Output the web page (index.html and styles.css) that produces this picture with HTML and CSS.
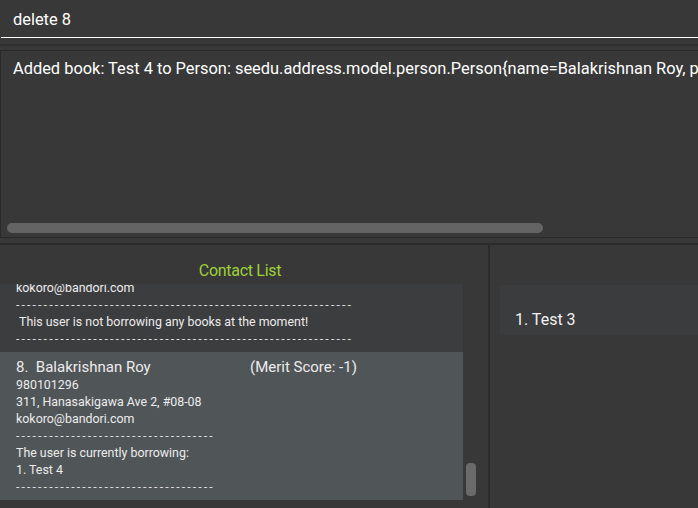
FILE: index.html
```html
<!DOCTYPE html>
<html>
<head>
<meta charset="utf-8">
<link rel="stylesheet" href="styles.css">
</head>
<body>
<div class="app">
  <div class="command">delete 8</div>
  <div class="sep"><div class="sep-line"></div></div>
  <div class="result">
    <div class="result-text">Added book: Test 4 to Person: seedu.address.model.person.Person{name=Balakrishnan Roy, phone=980101296, email=kokoro@bandori.com}</div>
    <div class="hscroll"><div class="hthumb"></div></div>
  </div>
  <div class="lower">
    <div class="left">
      <div class="title">Contact List</div>
      <div class="listwrap">
        <div class="list">
          <div class="card first">
            <div class="line">kokoro@bandori.com</div>
            <div class="line dash">-------------------------------------------------------------</div>
            <div class="line">&nbsp;This user is not borrowing any books at the moment!</div>
            <div class="line dash">-------------------------------------------------------------</div>
          </div>
          <div class="card selected">
            <div class="head"><span class="name">8.&nbsp; Balakrishnan Roy</span><span class="merit">(Merit Score: -1)</span></div>
            <div class="line">980101296</div>
            <div class="line">311, Hanasakigawa Ave 2, #08-08</div>
            <div class="line">kokoro@bandori.com</div>
            <div class="line dash">------------------------------------</div>
            <div class="line">The user is currently borrowing:</div>
            <div class="line">1. Test 4</div>
            <div class="line dash">------------------------------------</div>
          </div>
        </div>
        <div class="vscroll"><div class="vthumb"></div></div>
      </div>
    </div>
    <div class="divider"></div>
    <div class="right">
      <div class="book">1. Test 3</div>
    </div>
  </div>
</div>
</body>
</html>
```
FILE: styles.css
```css
html, body {
  margin: 0;
  padding: 0;
  background: #383838;
}
body {
  font-family: Roboto, "Liberation Sans", sans-serif;
  color: #ffffff;
  width: 698px;
  height: 508px;
  overflow: hidden;
}
.app {
  display: flex;
  flex-direction: column;
  height: 508px;
}
.command {
  box-sizing: border-box;
  height: 38px;
  padding: 10px 0 0 12px;
  font-size: 16.4px;
  line-height: 20px;
  border-bottom: 1px solid #ffffff;
  margin-left: 1px;
}
.sep {
  height: 12px;
  padding-top: 6px;
  box-sizing: border-box;
}
.sep-line {
  height: 2px;
  background: #2f2f2f;
}
.result {
  height: 188px;
  box-sizing: border-box;
  border: 1px solid #2a2a2a;
  border-right: none;
  position: relative;
  overflow: hidden;
}
.result-text {
  padding: 8px 0 0 12px;
  font-size: 16.4px;
  line-height: 20px;
  white-space: nowrap;
}
.hscroll {
  position: absolute;
  left: 6px;
  right: 0;
  top: 172px;
  height: 10px;
}
.hthumb {
  width: 536px;
  height: 10px;
  border-radius: 5px;
  background: #646464;
}
.lower {
  margin-top: 5px;
  border-top: 2px solid #2b2b2b;
  flex: 1;
  display: flex;
}
.left {
  width: 488px;
  display: flex;
  flex-direction: column;
}
.title {
  height: 39px;
  box-sizing: border-box;
  padding-top: 17px;
  text-align: center;
  color: #9fd13b;
  font-size: 16px;
  line-height: 18px;
  letter-spacing: -0.3px;
  padding-right: 8px;
}
.listwrap {
  display: flex;
  height: 216px;
}
.list {
  width: 463px;
  overflow: hidden;
}
.card {
  background: #3c3d3f;
  padding: 0 0 5px 16px;
  font-size: 12.4px;
  line-height: 17px;
  color: #ececec;
}
.card.first {
  margin-top: -5px;
}
.card.selected {
  background: #505558;
  padding-top: 6px;
}
.head {
  display: flex;
  font-size: 15px;
  line-height: 18px;
}
.name {
  width: 234px;
}
.dash {
  letter-spacing: 2.1px;
  color: #dcdcdc;
  white-space: nowrap;
}
.vscroll {
  width: 16px;
  position: relative;
}
.vthumb {
  position: absolute;
  left: 3px;
  top: 179px;
  width: 10px;
  height: 33px;
  border-radius: 4px;
  background: #6a6a6a;
}
.divider {
  width: 2px;
  background: #2b2b2b;
}
.right {
  flex: 1;
  padding: 40px 0 0 10px;
}
.book {
  height: 50px;
  box-sizing: border-box;
  background: #3b3c3e;
  padding: 25px 0 0 15px;
  font-size: 16px;
  line-height: 20px;
  color: #f0f0f0;
}
```
